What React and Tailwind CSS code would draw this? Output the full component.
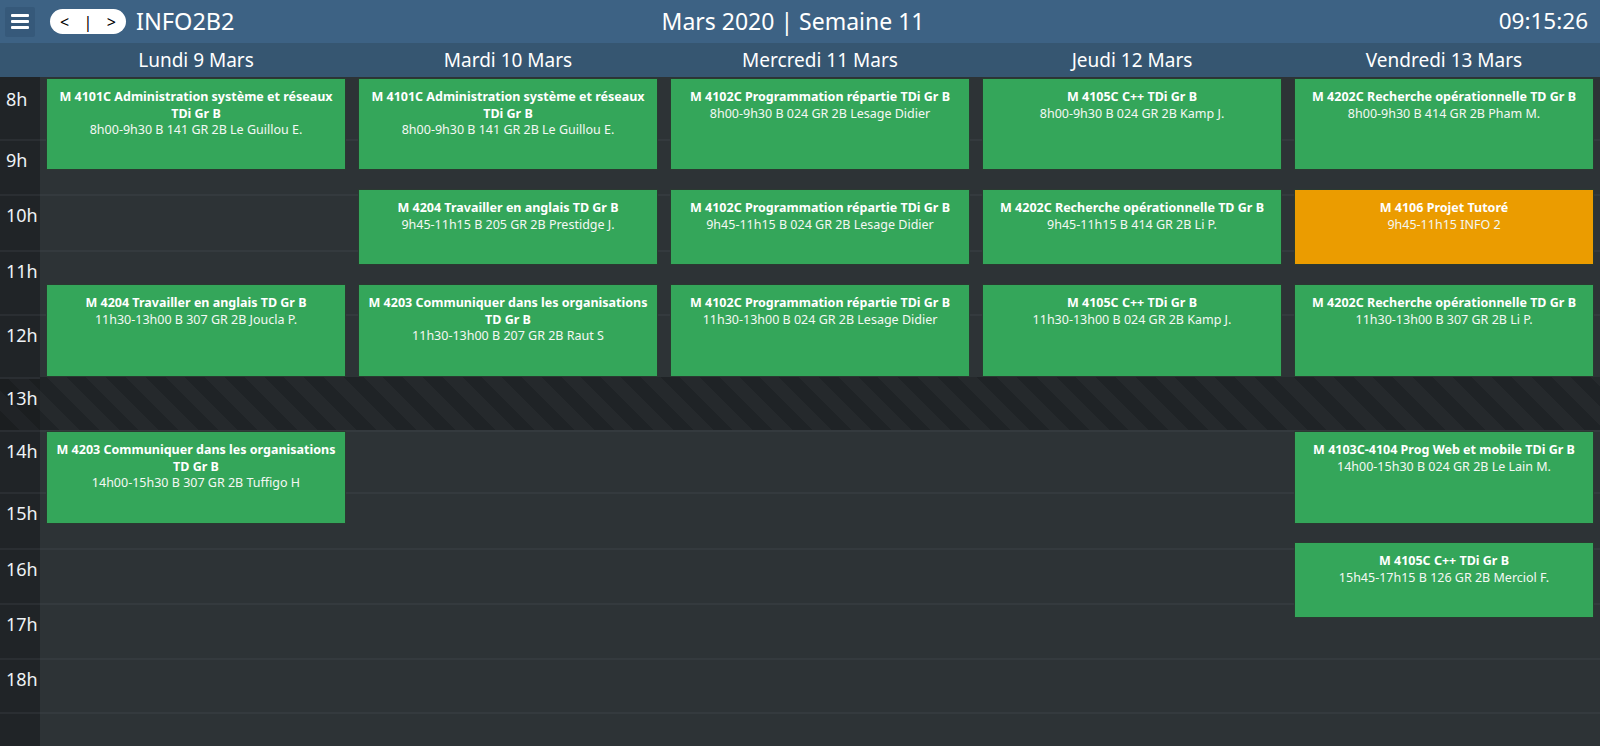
import React from "react";

const hours = [
  { label: "8h", h: "h-[62px]", first: true },
  { label: "9h", h: "h-[55px]" },
  { label: "10h", h: "h-[56px]" },
  { label: "11h", h: "h-[64px]" },
  { label: "12h", h: "h-[63px]" },
  { label: "13h", h: "h-[53px]", lunch: true },
  { label: "14h", h: "h-[62px]" },
  { label: "15h", h: "h-[56px]" },
  { label: "16h", h: "h-[55px]" },
  { label: "17h", h: "h-[55px]" },
  { label: "18h", h: "h-[54px]" },
  { label: "", h: "flex-1" },
];

const days = ["Lundi 9 Mars", "Mardi 10 Mars", "Mercredi 11 Mars", "Jeudi 12 Mars", "Vendredi 13 Mars"];

const colClass = ["col-start-2", "col-start-3", "col-start-4", "col-start-5", "col-start-6"];
const rowClass = { 1: "row-start-2", 2: "row-start-4", 3: "row-start-6", 4: "row-start-8", 5: "row-start-10" };

const events = [
  { d: 0, s: 1, t: ["M 4101C Administration système et réseaux", "TDi Gr B"], i: "8h00-9h30 B 141 GR 2B Le Guillou E." },
  { d: 0, s: 3, t: ["M 4204 Travailler en anglais TD Gr B"], i: "11h30-13h00 B 307 GR 2B Joucla P." },
  { d: 0, s: 4, t: ["M 4203 Communiquer dans les organisations", "TD Gr B"], i: "14h00-15h30 B 307 GR 2B Tuffigo H" },
  { d: 1, s: 1, t: ["M 4101C Administration système et réseaux", "TDi Gr B"], i: "8h00-9h30 B 141 GR 2B Le Guillou E." },
  { d: 1, s: 2, t: ["M 4204 Travailler en anglais TD Gr B"], i: "9h45-11h15 B 205 GR 2B Prestidge J." },
  { d: 1, s: 3, t: ["M 4203 Communiquer dans les organisations", "TD Gr B"], i: "11h30-13h00 B 207 GR 2B Raut S" },
  { d: 2, s: 1, t: ["M 4102C Programmation répartie TDi Gr B"], i: "8h00-9h30 B 024 GR 2B Lesage Didier" },
  { d: 2, s: 2, t: ["M 4102C Programmation répartie TDi Gr B"], i: "9h45-11h15 B 024 GR 2B Lesage Didier" },
  { d: 2, s: 3, t: ["M 4102C Programmation répartie TDi Gr B"], i: "11h30-13h00 B 024 GR 2B Lesage Didier" },
  { d: 3, s: 1, t: ["M 4105C C++ TDi Gr B"], i: "8h00-9h30 B 024 GR 2B Kamp J." },
  { d: 3, s: 2, t: ["M 4202C Recherche opérationnelle TD Gr B"], i: "9h45-11h15 B 414 GR 2B Li P." },
  { d: 3, s: 3, t: ["M 4105C C++ TDi Gr B"], i: "11h30-13h00 B 024 GR 2B Kamp J." },
  { d: 4, s: 1, t: ["M 4202C Recherche opérationnelle TD Gr B"], i: "8h00-9h30 B 414 GR 2B Pham M." },
  { d: 4, s: 2, t: ["M 4106 Projet Tutoré"], i: "9h45-11h15 INFO 2", orange: true },
  { d: 4, s: 3, t: ["M 4202C Recherche opérationnelle TD Gr B"], i: "11h30-13h00 B 307 GR 2B Li P." },
  { d: 4, s: 4, t: ["M 4103C-4104 Prog Web et mobile TDi Gr B"], i: "14h00-15h30 B 024 GR 2B Le Lain M." },
  { d: 4, s: 5, t: ["M 4105C C++ TDi Gr B"], i: "15h45-17h15 B 126 GR 2B Merciol F." },
];

function Hamburger() {
  return (
    <button className="ml-[5px] flex h-[30px] w-[30px] flex-col items-center justify-center gap-[3px] rounded-[2px] bg-[#36597a]">
      <span className="block h-[3px] w-[18px] rounded-[1px] bg-white" />
      <span className="block h-[3px] w-[18px] rounded-[1px] bg-white" />
      <span className="block h-[3px] w-[18px] rounded-[1px] bg-white" />
    </button>
  );
}

export default function App() {
  return (
    <div className="flex h-[746px] w-full flex-col overflow-hidden bg-[#2d3336] text-white [font-family:'Noto_Sans',sans-serif]">
      {/* top bar */}
      <div className="grid h-[43px] shrink-0 grid-cols-[1fr_auto_1fr] items-center bg-[#3d6284]">
        <div className="flex items-center">
          <Hamburger />
          <div className="ml-[15px] flex h-[25px] w-[76px] items-center justify-between rounded-full bg-white px-[10px] text-[16px] leading-none text-black">
            <span>&lt;</span>
            <span>|</span>
            <span>&gt;</span>
          </div>
          <div className="ml-[10px] text-[23.5px] leading-none">INFO2B2</div>
        </div>
        <div className="mr-[14px] text-[23px] leading-none">Mars 2020 | Semaine 11</div>
        <div className="pr-[12px] text-right text-[22.5px] leading-none">09:15:26</div>
      </div>

      {/* day header */}
      <div className="grid h-[34px] shrink-0 grid-cols-[40px_repeat(5,1fr)] items-center bg-[#365671] text-[19px] leading-none">
        <div />
        {days.map((d) => (
          <div key={d} className="text-center">
            {d}
          </div>
        ))}
      </div>

      {/* body */}
      <div className="relative flex flex-1 flex-col">
        {hours.map((h, idx) => (
          <div key={idx} className={`grid grid-cols-[40px_1fr] ${h.h}`}>
            <div
              className={`${h.first ? "pt-[10px]" : "border-t-2 border-[#2a2e32] pt-[7px]"} ${
                h.lunch
                  ? "bg-[repeating-linear-gradient(45deg,#1b1e20_0px,#1b1e20_14px,#202326_14px,#202326_28px)]"
                  : "bg-[#202427]"
              } pl-[6px] text-[18px] leading-[24px] text-[#eef2f5]`}
            >
              {h.label}
            </div>
            <div
              className={`${h.first ? "" : h.lunch ? "" : "border-t-2 border-[#343a3e]"} ${
                h.lunch
                  ? "bg-[repeating-linear-gradient(45deg,#1f2326_0px,#1f2326_14px,#25292c_14px,#25292c_28px)]"
                  : ""
              }`}
            />
          </div>
        ))}

        {/* events overlay */}
        <div className="absolute inset-0 grid grid-cols-[40px_repeat(5,1fr)] grid-rows-[1px_92px_19px_76px_19px_93px_54px_93px_18px_76px_1fr]">
          {events.map((e, k) => (
            <div
              key={k}
              className={`${colClass[e.d]} ${rowClass[e.s]} row-span-1 mx-[6px] border border-[#2a3a31] ${
                e.orange ? "bg-[#eb9c00]" : "bg-[#34a65a]"
              } px-[4px] pt-[10px] text-center text-[12.5px] leading-[16.5px] text-white`}
            >
              {e.t.map((l, j) => (
                <div key={j} className="font-bold">
                  {l}
                </div>
              ))}
              <div className="font-normal text-[#f4f8f4]">{e.i}</div>
            </div>
          ))}
        </div>
      </div>
    </div>
  );
}
